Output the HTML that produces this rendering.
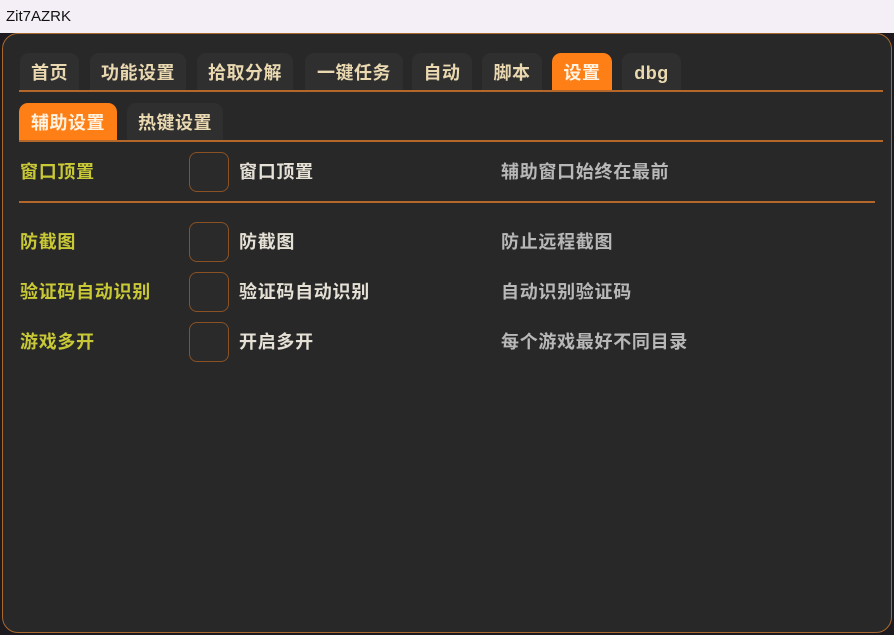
<!DOCTYPE html><html><head><meta charset="utf-8"><style>
body{margin:0;width:894px;height:635px;background:#1c1a1e;position:relative;overflow:hidden;font-family:"Liberation Sans","Noto Sans CJK SC",sans-serif;}
.title{position:absolute;left:0;top:0;width:894px;height:33px;background:#f4eff6;font-size:15px;color:#111;line-height:34px;padding-left:6px;box-sizing:border-box;font-weight:normal}
.panel{position:absolute;left:2px;top:33px;width:890px;height:600px;background:#282828;border:1px solid #a8682e;border-radius:16px;box-sizing:border-box}
.t{position:absolute;height:37px;background:#2f2f2f;border-radius:9px 9px 0 0;color:#ead9b0;font-weight:bold;font-size:18px;text-align:center;line-height:40px;letter-spacing:0.5px}
.on{background:#ff7f17;color:#fff3e0}
.line{position:absolute;height:2px;background:#b5672a}
.l,.m,.d{position:absolute;font-weight:bold;font-size:18px;line-height:26px;letter-spacing:0.7px}
.l{color:#c9c936}
.m{color:#e6e1d6}
.d{color:#b8b8b8}
.cb{position:absolute;left:189px;width:38px;height:38px;border:1.5px solid #8a5224;border-radius:8px;background:#2a2a2a}
</style></head><body>
<div class="title">Zit7AZRK</div>
<div class="panel"></div>
<div class="t" style="left:20px;top:53px;width:59px">首页</div>
<div class="t" style="left:90px;top:53px;width:96px">功能设置</div>
<div class="t" style="left:197px;top:53px;width:96px">拾取分解</div>
<div class="t" style="left:305px;top:53px;width:98px">一键任务</div>
<div class="t" style="left:412px;top:53px;width:60px">自动</div>
<div class="t" style="left:482px;top:53px;width:60px">脚本</div>
<div class="t on" style="left:552px;top:53px;width:60px">设置</div>
<div class="t" style="left:622px;top:53px;width:59px">dbg</div>
<div class="line" style="left:19px;top:90px;width:864px"></div>
<div class="t on" style="left:19px;top:103px;width:98px">辅助设置</div>
<div class="t" style="left:127px;top:103px;width:96px">热键设置</div>
<div class="line" style="left:19px;top:140px;width:864px"></div>
<div class="l" style="left:20px;top:159px">窗口顶置</div><div class="cb" style="top:152px"></div><div class="m" style="left:239px;top:159px">窗口顶置</div><div class="d" style="left:501px;top:159px">辅助窗口始终在最前</div>
<div class="line" style="left:19px;top:201px;width:856px;height:1.5px"></div>
<div class="l" style="left:20px;top:229px">防截图</div><div class="cb" style="top:222px"></div><div class="m" style="left:239px;top:229px">防截图</div><div class="d" style="left:501px;top:229px">防止远程截图</div>
<div class="l" style="left:20px;top:279px">验证码自动识别</div><div class="cb" style="top:272px"></div><div class="m" style="left:239px;top:279px">验证码自动识别</div><div class="d" style="left:501px;top:279px">自动识别验证码</div>
<div class="l" style="left:20px;top:329px">游戏多开</div><div class="cb" style="top:322px"></div><div class="m" style="left:239px;top:329px">开启多开</div><div class="d" style="left:501px;top:329px">每个游戏最好不同目录</div>
</body></html>
